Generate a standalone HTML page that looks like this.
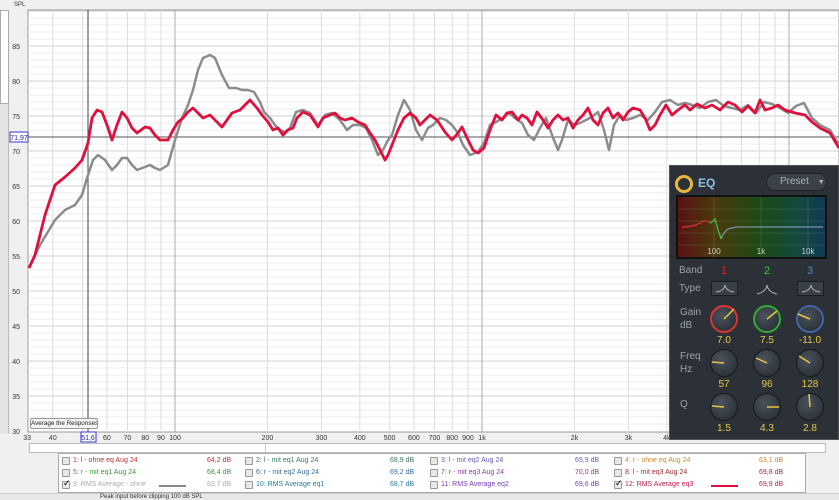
<!DOCTYPE html>
<html><head><meta charset="utf-8">
<style>
*{margin:0;padding:0;box-sizing:border-box}
body{width:839px;height:500px;overflow:hidden;background:#f0f0f0;font-family:"Liberation Sans",sans-serif;position:relative}
.a{position:absolute}
.ax{font-size:7px;color:#333}
.eq{background:#2c3137;border:1px solid #555;left:669px;top:165px;width:170px;height:275px}
.lbl{color:#9aa3b0;font-size:10px}
.knob{position:absolute;width:28px;height:28px;border-radius:50%;background:radial-gradient(circle at 40% 35%,#4a525c,#23282e);border:1px solid #15181c}
.val{position:absolute;color:#e7c646;font-size:10px;width:40px;text-align:center}
.lg{font-size:7px}
.cb{position:absolute;width:8px;height:8px;border:1px solid #999;background:#e8e8e8;border-radius:1px}
</style></head><body>
<div class="a ax" style="left:14px;top:2px;font-size:6px">SPL</div>
<div class="a" style="left:0;top:10px;width:9px;height:94px;background:#fff;border:1px solid #aaa"></div>
<div class="a" style="left:0;top:104px;width:9px;height:330px;background:#e4e4e4;border-right:1px solid #bbb"></div>
<svg class="a" style="left:0;top:0" width="839" height="445" id="s"></svg>
<div class="a" style="left:30px;top:418px;width:68px;height:11px;background:#f4f4f4;border:1px solid #999;border-radius:2px;font-size:6.3px;line-height:9px;text-align:center;color:#222;white-space:nowrap;overflow:hidden">Average the Responses</div>
<!-- scrollbar -->
<div class="a" style="left:29px;top:443px;width:797px;height:10px;background:#fff;border:1px solid #bbb"></div>
<div class="a" style="left:38px;top:444px;width:228px;height:8px;background:#fff;border-right:1px solid #ccc"></div>
<!-- legend -->
<div class="a" style="left:58px;top:453px;width:748px;height:40px;background:#fff;border:1px solid #aaa"></div>
<div id="lg"></div>
<div class="a" style="left:0;top:493px;width:839px;height:7px;background:#e8e8e8;border-top:1px solid #ccc"></div>
<div class="a" style="left:100px;top:494px;font-size:6px;color:#333">Peak input before clipping 100 dB SPL</div>
<!-- EQ -->
<div class="a eq">
 <div class="a" style="left:5px;top:9px;width:18px;height:18px;border-radius:50%;border:3px solid #e7b93a"></div>
 <div class="a" style="left:28px;top:10px;color:#8fbfe6;font-size:12px;font-weight:bold">EQ</div>
 <div class="a" style="left:96px;top:7px;width:61px;height:18px;border-radius:9px;background:#3b4249;border:1px solid #222;color:#aab3bd;font-size:10px;line-height:16px;padding-left:13px">Preset <span style="font-size:7px;margin-left:6px">▼</span></div>
 <div class="a" style="left:6px;top:29px;width:151px;height:64px;border:2px solid #111;background:linear-gradient(90deg,#5a1212,#4a3a0c 25%,#1e4a14 55%,#134a3a 80%,#0f3a55)">
  <svg width="147" height="60" style="position:absolute;left:0;top:0">
   <g stroke="#6a8060" stroke-width="0.6" opacity="0.6"><line x1="0" y1="12" x2="147" y2="12"/><line x1="0" y1="24" x2="147" y2="24"/><line x1="0" y1="36" x2="147" y2="36"/><line x1="0" y1="48" x2="147" y2="48"/><line x1="36" y1="0" x2="36" y2="60"/><line x1="83" y1="0" x2="83" y2="60"/><line x1="130" y1="0" x2="130" y2="60"/></g>
   <path d="M4 30 Q15 30 22 26 Q28 22 32 26 Q36 24 37 22" stroke="#d03030" stroke-width="1.3" fill="none"/>
   <path d="M32 26 Q36 24 37 22 Q38 25 40 33 Q42 38 43 42" stroke="#40c040" stroke-width="1.3" fill="none"/>
   <path d="M43 42 Q45 36 50 32 Q56 30 62 30 L145 30" stroke="#8090a8" stroke-width="1.3" fill="none"/>
   <text x="36" y="57" font-size="8" fill="#ccc" text-anchor="middle" font-family="Liberation Sans">100</text>
   <text x="83" y="57" font-size="8" fill="#ccc" text-anchor="middle" font-family="Liberation Sans">1k</text>
   <text x="130" y="57" font-size="8" fill="#ccc" text-anchor="middle" font-family="Liberation Sans">10k</text>
  </svg>
 </div>
 <div class="a lbl" style="left:9px;top:99px">Band</div>
 <div class="a" style="left:51px;top:99px;color:#d22;font-size:11px">1</div>
 <div class="a" style="left:94px;top:99px;color:#3c3;font-size:11px">2</div>
 <div class="a" style="left:137px;top:99px;color:#48c;font-size:11px">3</div>
 <div class="a lbl" style="left:9px;top:117px">Type</div>
 <div class="a" style="left:41px;top:115px;width:27px;height:15px;background:#3a4048;border:1px solid #1a1d21"></div>
 <div class="a" style="left:127px;top:115px;width:27px;height:15px;background:#3a4048;border:1px solid #1a1d21"></div>
 <svg class="a" style="left:0;top:112px" width="170" height="22"><g stroke="#aab" fill="none" stroke-width="1"><path d="M46 14 Q54 13 55 7 Q56 13 64 14"/><path d="M87 16 Q96 14 97 7 Q98 14 107 16"/><path d="M132 14 Q140 13 141 7 Q142 13 150 14"/></g></svg>
 <div class="a lbl" style="left:10px;top:140px;line-height:13px">Gain<br>dB</div>
 <div class="a lbl" style="left:10px;top:184px;line-height:13px">Freq<br>Hz</div>
 <div class="a lbl" style="left:10px;top:233px">Q</div>
 <div class="knob" style="left:40px;top:139px;border:2px solid #d33"></div>
 <div class="knob" style="left:83px;top:139px;border:2px solid #3a3"></div>
 <div class="knob" style="left:126px;top:139px;border:2px solid #46a"></div>
 <div class="knob" style="left:40px;top:183px"></div>
 <div class="knob" style="left:83px;top:183px"></div>
 <div class="knob" style="left:126px;top:183px"></div>
 <div class="knob" style="left:40px;top:227px"></div>
 <div class="knob" style="left:83px;top:227px"></div>
 <div class="knob" style="left:126px;top:227px"></div>
 <svg class="a" style="left:0;top:0" width="170" height="275"><g stroke="#e7c646" stroke-width="1.5">
  <line x1="54" y1="153" x2="64" y2="143"/><line x1="97" y1="153" x2="107" y2="145"/><line x1="140" y1="153" x2="128" y2="148"/>
  <line x1="54" y1="197" x2="42" y2="196"/><line x1="97" y1="197" x2="86" y2="192"/><line x1="140" y1="197" x2="129" y2="190"/>
  <line x1="54" y1="241" x2="42" y2="240"/><line x1="97" y1="241" x2="109" y2="241"/><line x1="140" y1="241" x2="139" y2="228"/>
 </g></svg>
 <div class="val" style="left:34px;top:169px">7.0</div><div class="val" style="left:77px;top:169px">7.5</div><div class="val" style="left:120px;top:169px">-11.0</div>
 <div class="val" style="left:34px;top:213px">57</div><div class="val" style="left:77px;top:213px">96</div><div class="val" style="left:120px;top:213px">128</div>
 <div class="val" style="left:34px;top:257px">1.5</div><div class="val" style="left:77px;top:257px">4.3</div><div class="val" style="left:120px;top:257px">2.8</div>
</div>
<script>
const s=document.getElementById('s');let h='';
const X=f=>175+307*Math.log10(f/100), Y=d=>46+(85-d)*7;
h+='<rect x="28" y="10" width="811" height="422" fill="#fff" stroke="#999"/>';
for(let d=31;d<=90;d++){const y=Y(d);if(y<10)continue;h+=`<line x1="28" x2="839" y1="${y}" y2="${y}" stroke="${d%5?'#ececec':'#d2d2d2'}"/>`;}
const fs=[40,50,60,70,80,90,100,200,300,400,500,600,700,800,900,1000,2000,3000,4000,5000,6000,7000,8000,9000,10000,20000];
fs.forEach(f=>{const x=X(f);if(x>839)return;h+=`<line x1="${x}" x2="${x}" y1="10" y2="432" stroke="${(f==100||f==1000||f==10000)?'#aaa':'#ddd'}"/>`;});
h+=`<line x1="88" x2="88" y1="10" y2="440" stroke="#444"/><line x1="28" x2="839" y1="137" y2="137" stroke="#555"/>`;
for(let d=30;d<=85;d+=5)h+=`<text x="20" y="${Y(d)+3}" font-size="7" text-anchor="end" fill="#333" font-family="Liberation Sans">${d}</text>`;
h+=`<rect x="10" y="132" width="18" height="10" fill="#fff" stroke="#33c"/><text x="19" y="140" font-size="7" text-anchor="middle" fill="#22a" font-family="Liberation Sans">71,97</text>`;
const lab=[[33,'33'],[40,'40'],[60,'60'],[70,'70'],[80,'80'],[90,'90'],[100,'100'],[200,'200'],[300,'300'],[400,'400'],[500,'500'],[600,'600'],[700,'700'],[800,'800'],[900,'900'],[1000,'1k'],[2000,'2k'],[3000,'3k'],[4000,'4k']];
lab.forEach(([f,t])=>h+=`<text x="${X(f)}" y="440" font-size="7" text-anchor="middle" fill="#333" font-family="Liberation Sans">${t}</text>`);
h+=`<rect x="81" y="432" width="15" height="10" fill="#fff" stroke="#33c"/><text x="88" y="440" font-size="7" text-anchor="middle" fill="#22a" font-family="Liberation Sans">51,6</text>`;
const red="29,268 35,255 45,215 55,185 65,177 75,168 82,160 88,143 92,118 97,110 102,112 107,125 112,140 117,125 122,112 127,118 132,128 137,133 145,127 150,128 155,135 160,140 168,140 173,130 178,122 183,118 188,112 193,108 198,113 203,118 210,115 215,120 222,127 227,120 232,113 240,110 245,105 250,100 257,108 262,115 268,122 273,130 278,128 283,135 288,130 293,128 297,118 303,112 310,115 318,127 323,118 330,115 335,113 340,118 345,120 352,118 358,122 365,125 370,133 375,140 380,150 385,160 388,155 392,145 398,130 404,118 410,113 416,118 420,125 425,120 430,115 437,120 445,132 452,140 458,133 462,127 468,140 473,150 478,153 484,148 490,130 496,115 502,120 507,113 512,112 518,120 522,115 527,118 532,125 537,112 543,120 548,128 553,120 558,115 563,120 568,118 573,128 578,120 583,115 588,108 593,120 598,125 603,113 608,108 613,118 618,113 623,120 628,112 633,108 640,110 645,118 650,130 655,125 660,115 666,105 672,115 678,110 685,105 690,110 697,104 705,108 712,105 720,110 728,102 735,105 742,112 748,106 755,113 760,100 765,110 772,108 778,105 785,110 795,113 805,115 812,122 820,128 830,133 839,148";
const grey="29,268 40,245 55,220 65,210 75,205 82,195 88,175 93,160 98,155 105,160 112,170 117,165 122,158 127,158 132,165 137,170 145,167 150,165 155,168 160,170 168,165 175,140 182,118 188,105 193,90 198,70 203,58 210,55 215,58 222,75 229,88 236,88 242,90 248,90 254,92 260,102 264,112 270,118 275,125 280,130 285,132 290,128 296,112 303,110 310,113 318,125 325,115 332,113 340,120 347,130 353,125 360,125 366,128 372,140 378,155 383,150 388,140 392,135 398,115 404,100 410,110 416,130 422,140 428,128 433,125 440,118 446,120 452,125 458,133 463,145 470,155 478,152 484,143 490,125 496,122 503,118 509,113 515,118 522,123 528,135 534,140 540,128 546,118 552,135 558,150 562,140 568,120 575,125 582,122 590,118 598,112 604,130 609,150 614,125 620,115 626,120 633,118 640,115 648,120 655,112 662,102 670,100 678,105 685,103 692,105 700,108 708,102 716,100 724,106 732,108 740,110 748,105 756,113 764,102 772,104 780,108 788,113 796,106 804,103 812,118 820,125 830,130 839,145";
h+=`<polyline points="${grey}" fill="none" stroke="#8c8c8c" stroke-width="2.5" stroke-linejoin="round"/>`;
h+=`<polyline points="${red}" fill="none" stroke="#e0103e" stroke-width="2.8" stroke-linejoin="round"/>`;
s.innerHTML=h;
const L=[[62,461,'1: l - ohne eq Aug 24','64,2 dB','#b33'],[245,461,'2: l - mit eq1 Aug 24','68,9 dB','#3a7a5a'],[430,461,'3: l - mit eq2 Aug 24','69,9 dB','#6a5ab8'],[614,461,'4: r - ohne eq Aug 24','63,1 dB','#c98a2a'],
[62,473,'5: r - mit eq1 Aug 24','68,4 dB','#3a9a3a'],[245,473,'6: r - mit eq2 Aug 24','69,2 dB','#3a6a9a'],[430,473,'7: r - mit eq3 Aug 24','70,0 dB','#8a3aa0'],[614,473,'8: l - mit eq3 Aug 24','69,8 dB','#a03030'],
[62,485,'9: RMS Average - ohne','63,7 dB','#aaa',1,'#888'],[245,485,'10: RMS Average eq1','68,7 dB','#2a7a9a'],[430,485,'11: RMS Average eq2','69,6 dB','#7a3ab8'],[614,485,'12: RMS Average eq3','69,9 dB','#c02050',1,'#e0103e']];
let g='';L.forEach(([x,y,t,v,c,ck,lc])=>{g+=`<div class="cb" style="left:${x}px;top:${y-4}px">${ck?'<span style="position:absolute;left:0;top:-4px;font-size:9px;color:#000">✓</span>':''}</div><div class="a lg" style="left:${x+11}px;top:${y-4}px;color:${c}">${t}</div><div class="a lg" style="left:${x+145}px;top:${y-4}px;color:${c}">${v}</div>`;if(lc)g+=`<div class="a" style="left:${x+97}px;top:${y}px;width:27px;height:2px;background:${lc}"></div>`;});
document.getElementById('lg').innerHTML=g;
</script>
</body></html>
